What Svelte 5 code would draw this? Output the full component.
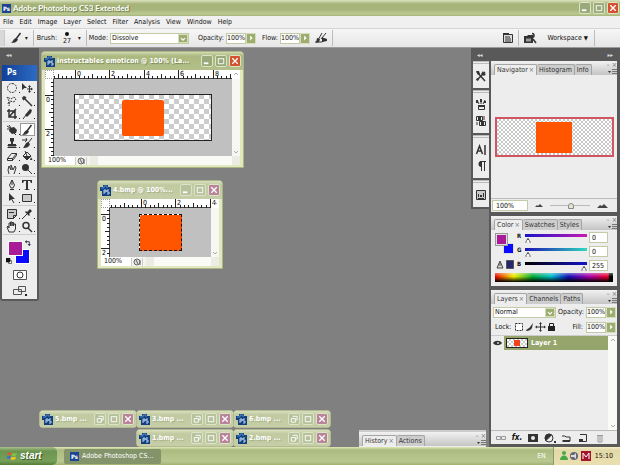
<script lang="ts">
  type Doc = {
    title: string;
    kind: string;
    originX: number;
    originY: number;
    width: number;
    height: number;
    selected: boolean;
  };

  const menus = ['File', 'Edit', 'Image', 'Layer', 'Select', 'Filter', 'Analysis', 'View', 'Window', 'Help'];

  const docs: Doc[] = [
    { title: 'instructables emoticon @ 100% (La...', kind: 'wide', originX: 21, originY: 16, width: 180, height: 77, selected: false },
    { title: '4.bmp @ 100%...', kind: 'small', originX: 31, originY: 6, width: 103, height: 49, selected: true },
  ];

  const minimized = [
    { title: '5.bmp ...', slot: 'r1 c1' },
    { title: '3.bmp ...', slot: 'r1 c2' },
    { title: '6.bmp ...', slot: 'r1 c3' },
    { title: '1.bmp ...', slot: 'r2 c2' },
    { title: '2.bmp ...', slot: 'r2 c3' },
  ];

  // 12x12 glyphs: line = stroked path, fill = solid path
  const toolGroups = [
    [
      { name: 'Marquee', line: 'M6 1.5a4.5 4.5 0 1 1 0 9a4.5 4.5 0 1 1 0-9', dash: '2 1' },
      { name: 'Move', line: 'M6 7h5M8.500 4.500v5', fill: 'M1 1l5 5H3.500L1 8zM8.500 3l1.500 2H7zM8.500 11l1.500-2H7zM12 7l-2-1.500v3z' },
      { name: 'Lasso', line: 'M2 9L3 6L1 2l4 2l3-2l2 2l-2 3l-4-1l-1 5', dash: '2 1' },
      { name: 'Magic wand', line: 'M3 3l8 8M1 3h2M3 1v2M5 2L4 3M2 5l1-1', bold: true },
      { name: 'Crop', line: 'M3 1v8h8M1 3h8v8M3 9l7-8', bold: true },
      { name: 'Slice', line: 'M2 11l3-4', fill: 'M4 7l5-6l2 1l-1 3l-4 4z' },
    ],
    [
      { name: 'Healing brush', line: 'M1 2l3 2M1 5h3M3 1l2 3M8 9l2 2', fill: 'M4 4l4-1l3 3l-1 3l-4 1l-3-3z' },
      { name: 'Brush', line: 'M10.500 1L6 7', fill: 'M6 6l2 1.500C7 10 5 11 1 11c2-1 2-4 5-5z', active: true, bold: true },
      { name: 'Clone stamp', line: 'M1.500 10.500h9M2 8h8v1H2z', fill: 'M4 1h4v3L7 5v2h3v2H2V7h3V5L4 4z' },
      { name: 'History brush', line: 'M11 1L7 6M1 3h5l-1-2M6 3L4 5', fill: 'M7 5l2 2c-1 3-3 4-7 4c2-2 2-5 5-6z' },
      { name: 'Eraser', line: 'M1.500 8.500l4-5h5l-4 5zM1.500 8.500v2h5v-2M6.500 10.500l4-5v-2' },
      { name: 'Paint bucket', line: 'M2 6l4-4l4 4l-4 4zM4 1l2 5', fill: 'M2 6h8l-4 4zM10 7l1.500 3H9z' },
      { name: 'Smudge', line: 'M3 11l-1-4l1-4l2 4V2l2 5l2-4l1 2l-2 6' },
      { name: 'Burn', line: 'M7 7l4 4', fill: 'M4.500 1a3.500 3.500 0 1 1 0 7a3.500 3.500 0 1 1 0-7' },
    ],
    [
      { name: 'Pen', line: 'M6 1v5M3.500 6L6 1l2.500 5L7 9H5zM4 10.500h4' },
      { name: 'Type', fill: 'M1 1h10v3h-1L9 2H7v8l2 1H3l2-1V2H3L2 4H1z' },
      { name: 'Path selection', line: 'M5 6l3 5', fill: 'M3 1l6 6H6L3 9z' },
      { name: 'Rectangle', line: 'M1.500 2.500h9v7h-9z', tint: true },
    ],
    [
      { name: 'Notes', line: 'M1.500 1.500h9v6l-3 3h-6zM7.500 10.500v-3h3M3 4.500h5', tint: true },
      { name: 'Eyedropper', line: 'M1 11l6-6', fill: 'M6 4l3-3l2 2l-3 3l1 1l-1 1l-4-4l1-1z' },
      { name: 'Hand', line: 'M3 11L1 6l1-1l1 2V2h1.500v3V1H6v4V1.500h1.500V5L8 3h1.500v5L8 11z' },
      { name: 'Zoom', line: 'M5 1.500a3 3 0 1 1 0 6a3 3 0 1 1 0-6M7 7l4 4', bold: true },
    ],
  ];

  const dockGroups = [
    [{ name: 'Tool presets', line: 'M2 2l8 9M10 2L2 10', fill: 'M1 1l3 0l1 3l-2 1zM8 1l1 2l2 1l-2 2l-3-2zM1 9l2-1l1 2l-2 1z', bold: true }],
    [
      { name: 'Brushes', line: 'M2 1l2 4M6 1v4M10 1L8 5M3.500 6.500h6v4h-6z', fill: 'M1 1h2v3H1zM5 0h2v3H5zM9 2h2v2H9zM3 6h7v2H3z' },
      { name: 'Clone source', line: 'M1.500 1.500h6v4h-6zM4.500 6.500h6v4h-6zM9 1v4M2 7v3', fill: 'M3 2h3v3H3zM6 7h3v3H6z' },
    ],
    [
      { name: 'Character', line: 'M1.500 10L4.500 2L7.500 10M2.500 7h4M10 1v10', bold: true },
      { name: 'Paragraph', line: 'M6.500 2v9M9.500 2v9M5 1.500h6', fill: 'M6.500 1v6a3 3 0 0 1 0-6' },
    ],
    [{ name: 'Layer comps', line: 'M1.500 1.500h9v9h-9zM3 9.500h6', fill: 'M3 5h1v3H3zM5 6h2v2H5zM8 4h1v4H8z', tint: true }],
  ];

  const layerActions = [
    { name: 'Link layers', line: 'M1.500 4.500h4v3h-4zM6.500 4.500h4v3h-4z', dim: true },
    { name: 'Layer style', text: 'fx.' },
    { name: 'Layer mask', line: 'M1.500 2.500h9v7h-9z', fill: 'M1 2h10v8H1zM6 4a2 2 0 1 0 0 4a2 2 0 1 0 0-4' },
    { name: 'Adjustment layer', line: 'M5 2a4 4 0 1 1 0 8a4 4 0 1 1 0-8', fill: 'M2 9L8 3a4 4 0 0 0-6 6zM10 9h2v2h-2z' },
    { name: 'New group', line: 'M2 4h3l1 1h4v4H2', fill: 'M3 8h7v2H3z' },
    { name: 'New layer', line: 'M3 2.500h6.500v7H4', fill: 'M2 7h4v3H2z' },
    { name: 'Delete layer', line: 'M3 3.500h6M4 3v7h4V3M6 4v5', dim: true },
  ];

  const channels = [
    { id: 'red', label: 'R', value: 0, from: '#1a12c8', to: '#c81ab4' },
    { id: 'green', label: 'G', value: 0, from: '#1a12b4', to: '#30d8c0' },
    { id: 'blue', label: 'B', value: 255, from: '#000000', to: '#1414c8' },
  ];

  // eight ticks per labelled unit; every label counts two centimetres
  function ticks(origin: number, length: number) {
    return Array.from({ length: 60 }, (_, i) => i - 8)
      .map((n) => ({ n, at: origin + Math.round(n * 4.3) }))
      .filter((t) => t.at >= 0 && t.at < length);
  }

  function tickStart(n: number) {
    if (n % 8 === 0) return 0;
    return n % 4 === 0 ? 4 : 6;
  }
</script>

{#snippet glyph(icon)}
  <svg class="glyph" class:dim={icon.dim} viewBox="0 0 12 12" aria-hidden="true">
    {#if icon.line}
      <path
        d={icon.line}
        fill={icon.tint ? '#c9c9c9' : 'none'}
        stroke="currentColor"
        stroke-width={icon.bold ? 1.5 : 1}
        stroke-dasharray={icon.dash}
      />
    {/if}
    {#if icon.fill}<path d={icon.fill} fill="currentColor" fill-rule="evenodd" />{/if}
  </svg>
{/snippet}

{#snippet docIcon()}
  <svg class="doc-icon" viewBox="0 0 11 11" aria-hidden="true">
    <path d="M0 2h3V0h5v2h3v9H2V6H0z" fill="#153e7c" />
    <path d="M1 3h3V1h3v2" fill="none" stroke="#4d8bd0" />
    <path d="M4 9V5h2v2H4M9 5H7v2h2v2H7" fill="none" stroke="#b9d7f4" />
  </svg>
{/snippet}

{#snippet winButtons(restore)}
  <span class="win-buttons">
    <button class="win-btn" aria-label={restore ? 'Restore' : 'Minimize'}>
      <svg viewBox="0 0 11 11" aria-hidden="true">
        {#if restore}
          <path d="M4 2.500h5v4H7M2.500 5h4.500v4H2.500z" fill="none" stroke="#fff" />
        {:else}
          <path d="M2 8h5" stroke="#fff" stroke-width="2" />
        {/if}
      </svg>
    </button>
    <button class="win-btn" aria-label="Maximize">
      <svg viewBox="0 0 11 11" aria-hidden="true">
        <path d="M2.500 3v5.500h6V3M2 3h7" fill="none" stroke="#fff" />
      </svg>
    </button>
    <button class="win-btn close" aria-label="Close">
      <svg viewBox="0 0 11 11" aria-hidden="true">
        <path d="M2.500 2.500l6 6M8.500 2.500l-6 6" stroke="#fff" stroke-width="1.500" />
      </svg>
    </button>
  </span>
{/snippet}

{#snippet chevron(down)}
  <svg class="chevron" viewBox="0 0 8 8" aria-hidden="true">
    <path d={down ? 'M2 3l2 2l2-2' : 'M2 5l2-2l2 2'} fill="none" stroke="#aaa" />
  </svg>
{/snippet}

{#snippet tabs(items)}
  <div class="tab-bar">
    <div class="tabs" role="tablist">
      {#each items as item, i}
        <button class="tab" class:current={i === 0} role="tab" aria-selected={i === 0}>
          {item}{#if i === 0}<span class="tab-x">×</span>{/if}
        </button>
      {/each}
    </div>
    <div class="tab-tools">
      <span>– ×</span>
      <svg width="9" height="6" viewBox="0 0 9 6" aria-hidden="true">
        <path d="M0 2h3L1.500 4z" fill="#333" />
        <path d="M4 .5h5M4 2.500h5M4 4.500h5" stroke="#777" />
      </svg>
    </div>
  </div>
{/snippet}

{#snippet percent(id, label)}
  <label for={id}>{label}</label>
  <span class="percent">
    <input {id} type="text" value="100%" />
    <button class="arrow-btn" aria-label="{label} slider">
      <svg viewBox="0 0 10 10" aria-hidden="true"><path d="M4 2l3 3l-3 3z" fill="#fff" /></svg>
    </button>
  </span>
{/snippet}

{#snippet dropdown(id, option)}
  <span class="dropdown">
    <select {id} aria-label={id}><option>{option}</option></select>
    <span class="arrow-btn">
      <svg viewBox="0 0 10 10" aria-hidden="true"><path d="M2.500 4L5 6.500L7.500 4" fill="none" stroke="#fff" stroke-width="1.500" /></svg>
    </span>
  </span>
{/snippet}

<div class="app">
  <header class="title-bar">
    <span class="ps-badge">Ps</span>
    <h1>Adobe Photoshop CS3 Extended</h1>
    {@render winButtons(false)}
  </header>

  <nav class="menu-bar">
    {#each menus as menu}
      <button>{menu}</button>
    {/each}
  </nav>

  <div class="options-bar">
    <span class="grip"></span>
    <span class="brush-tool">
      {@render glyph(toolGroups[1][1])}
      <span class="caret">▾</span>
    </span>
    <span class="divider"></span>
    <span class="brush-label">Brush:</span>
    <button class="brush-size"><span class="dot"></span>27</button>
    <span class="caret brush-caret">▾</span>
    <span class="divider"></span>
    <label for="mode">Mode:</label>
    <span class="mode">{@render dropdown('mode', 'Dissolve')}</span>
    <span class="field">{@render percent('opacity', 'Opacity:')}</span>
    <span class="field flow">{@render percent('flow', 'Flow:')}</span>
    <svg class="airbrush" viewBox="0 0 14 12" aria-hidden="true">
      <path d="M1 10h7l4-3M8 1L4 8M12 1L7 7" fill="none" stroke="#333" />
      <path d="M3 6l3 1l-1 3l-3 1zM8 5l2 1l3 1v2l-5 1z" fill="#333" />
    </svg>
    <span class="divider"></span>
    <span class="spacer"></span>
    <svg class="glyph" viewBox="0 0 12 12" aria-hidden="true">
      <path d="M1.500 2.500h9v8h-9zM3 5h5M3 7h6M3 9h6" fill="#ddd" stroke="#333" />
      <path d="M1 1h6v2H1z" fill="#333" />
    </svg>
    <span class="divider"></span>
    <svg class="bridge" viewBox="0 0 14 12" aria-hidden="true">
      <path d="M1 4h3l1-1h5v8H1z" fill="#333" />
      <path d="M3 6.500h5v3H3z" fill="#999" />
      <path d="M9 1.500a2 2 0 1 1 0 4M10 7l3 4" fill="none" stroke="#333" stroke-width="1.500" />
    </svg>
    <button class="workspace-menu">Workspace <span class="caret">▼</span></button>
    <span class="divider"></span>
  </div>

  <main class="workspace">
    <aside class="toolbox">
      <div class="collapse">◂◂</div>
      <div class="ps-logo">Ps</div>
      {#each toolGroups as group}
        <div class="tool-group">
          {#each group as tool}
            <button class="tool" class:active={tool.active} aria-label={tool.name}>
              {@render glyph(tool)}
            </button>
          {/each}
        </div>
      {/each}
      <div class="swatches">
        <span class="swatch back"></span>
        <span class="swatch front"></span>
        <svg class="swap" viewBox="0 0 7 7" aria-hidden="true">
          <path d="M1 2h4v4" fill="none" stroke="#223" />
          <path d="M2 0v4L0 2zM3 5h4L5 7z" fill="#223" />
        </svg>
        <svg class="defaults" viewBox="0 0 7 7" aria-hidden="true">
          <path d="M3 3h3.500v3.500H3z" fill="#fff" stroke="#555" />
          <path d="M0 0h5v5H0z" fill="#111" />
        </svg>
      </div>
      <button class="mode-btn" aria-label="Quick mask">
        <svg viewBox="0 0 14 10" aria-hidden="true">
          <path d="M.5.5h13v9H.5z" fill="#fff" stroke="#555" />
          <circle cx="7" cy="5" r="3" fill="#fff" stroke="#333" />
        </svg>
      </button>
      <button class="mode-btn" aria-label="Screen mode">
        <svg viewBox="0 0 14 10" aria-hidden="true">
          <path d="M5.500.5h7v5h-7zM.5 3.500h8v5h-8z" fill="#eee" stroke="#555" />
          <path d="M12 8h2v2h-2z" fill="#222" />
        </svg>
      </button>
    </aside>

    <section class="desktop">
      {#each docs as doc}
        <article class="doc {doc.kind}">
          <div class="doc-title">
            {@render docIcon()}
            <h2>{doc.title}</h2>
            {@render winButtons(false)}
          </div>
          <div class="doc-body">
            <span class="corner"></span>
            <svg class="ruler-h" aria-hidden="true">
              {#each ticks(doc.originX, doc.width) as t}
                <path d="M{t.at} {tickStart(t.n)}V9" transform="translate(.5 0)" stroke="#222" />
                {#if t.n % 8 === 0 && t.n >= 0}<text x={t.at + 2} y="6">{t.n / 4}</text>{/if}
              {/each}
            </svg>
            <span class="scroll-end">{@render chevron(false)}</span>
            <svg class="ruler-v" aria-hidden="true">
              {#each ticks(doc.originY, doc.height) as t}
                <path d="M{tickStart(t.n)} {t.at}H9" transform="translate(0 .5)" stroke="#222" />
                {#if t.n % 8 === 0 && t.n >= 0}<text x="1" y={t.at + 7}>{t.n / 4}</text>{/if}
              {/each}
            </svg>
            <div class="pasteboard">
              <div class="image" class:selected={doc.selected}>
                <div class="orange"></div>
              </div>
            </div>
            <span class="scroll-v">{@render chevron(true)}</span>
            <div class="status">
              <span class="zoom">100%</span>
              <svg class="status-icon" viewBox="0 0 10 8" aria-hidden="true">
                <circle cx="5" cy="4" r="3" fill="#ddd" stroke="#666" />
                <path d="M4 2l2 4M8 2v5" fill="none" stroke="#666" />
              </svg>
              <span class="scroll-h"></span>
            </div>
          </div>
        </article>
      {/each}

      {#each minimized as item}
        <article class="doc mini {item.slot}">
          <div class="doc-title">
            {@render docIcon()}
            <h2>{item.title}</h2>
            {@render winButtons(true)}
          </div>
        </article>
      {/each}

      <div class="history">
        {@render tabs(['History', 'Actions'])}
      </div>
    </section>

    <aside class="dock-icons">
      <div class="collapse">◂◂</div>
      {#each dockGroups as group}
        <div class="dock-group">
          {#each group as icon}
            <button class="dock-btn" aria-label={icon.name}>{@render glyph(icon)}</button>
          {/each}
        </div>
      {/each}
    </aside>

    <aside class="panels">
      <div class="collapse right">▸▸</div>

      <section class="panel">
        {@render tabs(['Navigator', 'Histogram', 'Info'])}
        <div class="navigator">
          <div class="preview"><div class="preview-fill"></div></div>
        </div>
        <div class="nav-footer">
          <input class="nav-zoom" type="text" value="100%" aria-label="Zoom level" />
          <svg viewBox="0 0 8 5" width="8" height="5" aria-hidden="true"><path d="M0 4h8L5 1L3 3L2 2z" fill="#444" /></svg>
          <span class="nav-slider"><input type="range" min="0" max="100" value="52" aria-label="Zoom" /></span>
          <svg viewBox="0 0 11 6" width="11" height="6" aria-hidden="true"><path d="M0 5h11L7 1L5 3L3 2z" fill="#444" /></svg>
        </div>
      </section>

      <section class="panel">
        {@render tabs(['Color', 'Swatches', 'Styles'])}
        <div class="color">
          <div class="color-side">
            <div class="pair">
              <span class="chip back"></span>
              <span class="chip front"></span>
            </div>
            <svg class="gamut" viewBox="0 0 18 9" aria-hidden="true">
              <path d="M4 1L1 8h6zM4 3v3" fill="#ddd" stroke="#444" />
              <path d="M10.500.5h7v8h-7z" fill="#26266e" stroke="#555" />
            </svg>
          </div>
          <div class="channels">
            {#each channels as ch}
              <label for={ch.id}>{ch.label}</label>
              <input
                class="channel-range"
                type="range"
                min="0"
                max="255"
                value={ch.value}
                aria-label="{ch.label} slider"
                style="--from: {ch.from}; --to: {ch.to}"
              />
              <input class="channel-value" id={ch.id} type="text" value={ch.value} />
            {/each}
          </div>
        </div>
        <div class="spectrum"></div>
      </section>

      <section class="panel layers">
        {@render tabs(['Layers', 'Channels', 'Paths'])}
        <div class="layer-row">
          <span class="blend">{@render dropdown('blend', 'Normal')}</span>
          {@render percent('layer-opacity', 'Opacity:')}
        </div>
        <div class="layer-row locks">
          <span>Lock:</span>
          <svg viewBox="0 0 42 10" width="42" height="10" aria-hidden="true">
            <path d="M1.500 1.500h7v7h-7z" fill="#fff" stroke="#333" stroke-dasharray="2 1" />
            <path d="M12 9c1-3 3-2 4-4l3-4l-1 5c-1 2-3 3-6 3z" fill="#333" />
            <path d="M26.500 1v8M22.500 5h8" stroke="#333" />
            <path d="M25 2l1.500-2L28 2zM25 8l1.500 2L28 8zM23 3.500L21 5l2 1.500zM30 3.500L32 5l-2 1.500z" fill="#333" />
            <path d="M34 4h7v5h-7z" fill="#222" />
            <path d="M35.500 4V1.500h4V4" fill="none" stroke="#222" />
          </svg>
          <span class="spacer"></span>
          {@render percent('fill', 'Fill:')}
        </div>
        <div class="layer-list">
          <div class="layer-items">
            <div class="layer">
              <button class="eye" aria-label="Toggle visibility">
                <svg viewBox="0 0 9 7" aria-hidden="true">
                  <path d="M0 3C2 0 7 0 9 3C7 6 2 6 0 3z" fill="#333" />
                  <circle cx="5" cy="3" r="1" fill="#ccc" />
                </svg>
              </button>
              <div class="layer-main">
                <span class="thumb"><span></span></span>
                <span>Layer 1</span>
              </div>
            </div>
          </div>
          <div class="layer-scroll">{@render chevron(false)}{@render chevron(true)}</div>
        </div>
        <div class="layer-footer">
          {#each layerActions as action}
            <button aria-label={action.name}>
              {#if action.text}<i>{action.text}</i>{:else}{@render glyph(action)}{/if}
            </button>
          {/each}
        </div>
      </section>
    </aside>
  </main>

  <footer class="taskbar">
    <button class="start">
      <svg viewBox="0 0 11 11" aria-hidden="true">
        <path d="M1 2c2-1 3-1 4 0L4 5C3 4 2 4 0 5z" fill="#e8502c" />
        <path d="M6 2c1 1 3 1 5 0l-1 3c-2 1-4 1-5 0z" fill="#7cc242" />
        <path d="M0 6c2-1 3-1 4 0L3 9C2 8 1 8-1 9z" fill="#3b6fd8" />
        <path d="M5 6c1 1 3 1 5 0L9 9c-2 1-4 1-5 0z" fill="#f5c51c" />
      </svg>
      start
    </button>
    <button class="task"><span class="ps-badge">Ps</span>Adobe Photoshop CS...</button>
    <span class="spacer"></span>
    <span class="lang">EN</span>
    <div class="tray">
      <svg viewBox="0 0 32 12" width="32" height="12" aria-hidden="true">
        <circle cx="5" cy="3" r="2" fill="#48a848" />
        <path d="M1 10c0-6 8-6 8 0z" fill="#48a848" />
        <circle cx="15" cy="6" r="4" fill="#667" />
        <path d="M12 5h3l2-2v6l-2-2h-3z" fill="#ddd" />
        <path d="M22 1h10v10H22z" fill="#a5142c" />
        <path d="M24 9V3l3 4l3-4v6" fill="none" stroke="#fff" />
      </svg>
      <time>15:10</time>
    </div>
  </footer>
</div>

<style>
  :global(body) {
    background: #808080;
  }

  .app {
    --face: #ededed;
    --frame: #595959;
    --olive: #9dad71;
    --orange: #ff5500;
    display: flex;
    flex-direction: column;
    min-height: 100vh;
    font-family: 'DejaVu Sans Condensed', Tahoma, 'DejaVu Sans', sans-serif;
    font-size: 7px;
    line-height: 10px;
    color: #111;
  }

  .app :global(*) {
    box-sizing: border-box;
  }

  button,
  input,
  select {
    margin: 0;
    padding: 0;
    border: 0;
    background: none;
    font: inherit;
    color: inherit;
  }

  h1,
  h2 {
    margin: 0;
    font-weight: bold;
    white-space: nowrap;
    overflow: hidden;
    flex: 1;
    min-width: 0;
  }

  svg {
    display: block;
    flex-shrink: 0;
  }

  .glyph {
    width: 12px;
    height: 12px;
    color: #333;
  }

  .glyph.dim {
    color: #999;
  }

  .chevron {
    width: 8px;
    height: 8px;
  }

  .spacer {
    flex: 1;
  }

  /* Title bar */
  .title-bar {
    display: flex;
    align-items: center;
    height: 16px;
    padding: 0 1px 0 2px;
    gap: 2px;
    background: linear-gradient(#dbe3bf 0, #a5b378 4px, #a9b77f 10px, #bdc992 14px, #a5b378);
  }

  .title-bar h1 {
    font-family: Lato, 'Trebuchet MS', sans-serif;
    font-size: 8px;
    color: #fff;
    text-shadow: 1px 1px 1px #66733f;
  }

  .ps-badge {
    width: 9px;
    height: 9px;
    font-size: 6px;
    line-height: 9px;
    font-weight: bold;
    text-align: center;
    color: #fff;
    background: #1c4494;
  }

  .win-buttons {
    display: flex;
    gap: 2px;
  }

  .win-btn {
    width: 12px;
    height: 12px;
    border: 1px solid #dbe4c4;
    border-radius: 2px;
    background: #9aa97a;
  }

  .win-btn.close {
    background: #d3512f;
  }

  /* Menu */
  .menu-bar {
    display: flex;
    align-items: center;
    gap: 6px;
    height: 12px;
    padding: 0 3px;
    background: #f0f0f0;
  }

  /* Options */
  .options-bar {
    display: flex;
    align-items: center;
    height: 20px;
    border-top: 1px solid #d4d4d4;
    border-bottom: 1px solid #9a9a9a;
    background: linear-gradient(#f6f6f6, #e6e6e6);
  }

  .grip {
    width: 5px;
    height: 16px;
    border-right: 1px solid #c8c8c8;
    background: #d8d8d8;
  }

  .divider {
    width: 1px;
    height: 16px;
    background: #bbb;
  }

  .caret {
    font-size: 6px;
  }

  .brush-tool {
    display: flex;
    align-items: center;
    gap: 3px;
    padding: 0 5px;
  }

  .brush-label {
    padding: 0 4px 0 3px;
  }

  .brush-size {
    display: flex;
    flex-direction: column;
    align-items: center;
    gap: 1px;
    width: 12px;
    line-height: 8px;
  }

  .dot {
    width: 4px;
    height: 4px;
    border-radius: 50%;
    background: #111;
  }

  .brush-caret {
    padding: 0 5px;
  }

  .options-bar label {
    padding: 0 2px;
  }

  .dropdown,
  .percent {
    display: flex;
    height: 11px;
  }

  .dropdown {
    width: 100%;
    border: 1px solid #c3cba6;
    background: #fff;
  }

  .dropdown select {
    appearance: none;
    flex: 1;
    min-width: 0;
    padding-left: 1px;
    line-height: 9px;
  }

  .arrow-btn {
    width: 10px;
    border: 1px solid #d5ddb9;
    background: var(--olive);
  }

  .percent input {
    width: 20px;
    border: 1px solid #c3cba6;
    background: #fff;
    text-align: center;
  }

  .mode {
    width: 79px;
  }

  .field {
    display: flex;
    align-items: center;
    padding-left: 7px;
  }

  .field.flow {
    padding-left: 4px;
  }

  .airbrush,
  .bridge {
    width: 14px;
    height: 12px;
    margin: 0 4px;
  }

  .options-bar > .glyph {
    margin-right: 4px;
  }

  .workspace-menu {
    padding: 0 6px;
  }

  .options-bar > .divider:last-child {
    margin-right: 25px;
  }

  /* Workspace */
  .workspace {
    flex: 1;
    display: flex;
    align-items: flex-start;
    background: #808080;
  }

  .collapse {
    height: 13px;
    padding: 0 4px;
    font-size: 6px;
    line-height: 14px;
    color: #ddd;
    background: var(--frame);
  }

  .collapse.right {
    text-align: right;
  }

  .toolbox {
    width: 39px;
    border: solid var(--frame);
    border-width: 0 2px 2px;
    border-radius: 0 0 3px 3px;
    background: var(--face);
  }

  .toolbox .collapse {
    height: 17px;
  }

  .ps-logo {
    height: 16px;
    padding-left: 5px;
    font-size: 8px;
    font-weight: bold;
    line-height: 16px;
    color: #fff;
    background: linear-gradient(90deg, #123f97, #2d6cc4);
  }

  .tool-group {
    display: grid;
    grid-template-columns: 15px 15px;
    justify-content: center;
    padding-bottom: 1px;
    margin: 0 1px 1px;
    border-bottom: 1px solid #ccc;
  }

  .tool {
    display: flex;
    align-items: center;
    justify-content: center;
    height: 13px;
    background: linear-gradient(#222, #222) 14px 11px / 1px 1px no-repeat;
  }

  .tool.active {
    border: 1px solid #999;
    background: #fff;
  }

  .swatches {
    position: relative;
    height: 31px;
    margin: 0 4px;
  }

  .swatch,
  .swap,
  .defaults {
    position: absolute;
  }

  .swatch {
    width: 15px;
    height: 15px;
    border: 1px solid #fff;
  }

  .swatch.front {
    left: 2px;
    top: 5px;
    background: #a81a96;
  }

  .swatch.back {
    left: 9px;
    top: 13px;
    background: #0a0aff;
  }

  .swap {
    right: 2px;
    top: 4px;
    width: 6px;
    height: 6px;
  }

  .defaults {
    left: 0;
    bottom: 3px;
    width: 6px;
    height: 6px;
  }

  .mode-btn {
    display: flex;
    align-items: center;
    justify-content: center;
    width: 100%;
    height: 16px;
  }

  .mode-btn svg {
    width: 14px;
    height: 10px;
  }

  .desktop {
    position: relative;
    flex: 1;
    align-self: stretch;
  }

  /* Document windows sit on a free canvas */
  .doc {
    position: absolute;
    padding: 0 3px 2px;
    border: 1px solid #a9b585;
    border-radius: 4px 4px 0 0;
    background: #e1e8bd;
  }

  .doc.wide {
    left: 2px;
    top: 3px;
    width: 203px;
  }

  .doc.small {
    left: 58px;
    top: 132px;
    width: 126px;
  }

  .doc-title {
    display: flex;
    align-items: center;
    gap: 2px;
    height: 18px;
    margin: 0 -3px;
    padding: 0 2px;
    border-radius: 3px 3px 0 0;
    background: linear-gradient(#d3dab0, #abb87f 4px, #b3bf89);
  }

  .doc-title h2 {
    font-size: 7px;
    color: #fff;
    text-shadow: 1px 1px 1px #7a8655;
  }

  .doc-icon {
    width: 11px;
    height: 11px;
  }

  .small .doc-title,
  .mini .doc-title {
    background: linear-gradient(#d9dfbe, #c0c9a0 4px, #c6cea8);
  }

  .small h2,
  .mini h2 {
    text-shadow: 1px 1px 1px #a2ac82;
  }

  .small .win-btn,
  .mini .win-btn {
    background: #b7c19b;
  }

  .small .close,
  .mini .close {
    background: #b9839a;
  }

  .doc.mini {
    width: 98px;
    padding: 0 3px;
    border-color: #b1ba92;
    border-radius: 4px;
  }

  .mini .doc-title {
    height: 16px;
  }

  .mini.r1 {
    bottom: 19px;
  }

  .mini.r2 {
    bottom: 0;
  }

  .mini.c1 {
    left: 0;
  }

  .mini.c2 {
    left: 97px;
  }

  .mini.c3 {
    left: 194px;
  }

  .doc-body {
    display: grid;
    grid-template-columns: 9px 1fr 8px;
    grid-template-rows: 9px auto 9px;
    background: #fff;
  }

  .corner {
    border: 1px dotted #999;
  }

  .ruler-h,
  .ruler-v {
    width: 100%;
    height: 100%;
    overflow: visible;
  }

  .ruler-h {
    border-bottom: 1px solid #444;
  }

  .ruler-v {
    height: 0;
    min-height: 100%;
    border-right: 1px solid #444;
  }

  .ruler-h text,
  .ruler-v text {
    font-size: 7px;
  }

  .pasteboard {
    display: flex;
    align-items: center;
    justify-content: center;
    height: 77px;
    background: #c0c0c0;
  }

  .small .pasteboard {
    height: 49px;
  }

  .image {
    display: flex;
    align-items: center;
    justify-content: center;
    width: 138px;
    height: 47px;
    outline: 1px solid #222;
    outline-offset: -1px;
    background: repeating-conic-gradient(#ccc 0 25%, #fff 0 50%) 0 0 / 10px 10px;
  }

  .small .image {
    width: 43px;
    height: 37px;
  }

  .orange {
    width: 42px;
    height: 36px;
    border-radius: 2px;
    background: var(--orange);
  }

  .image.selected {
    outline: 1px dashed #111;
    background: #fff;
  }

  .scroll-v {
    display: flex;
    align-items: flex-end;
    background: #f7f7f3;
  }

  .status {
    grid-column: 1 / -1;
    display: flex;
    align-items: center;
    background: #f5f5f0;
  }

  .zoom {
    width: 30px;
    padding-left: 3px;
    line-height: 9px;
    background: #fff;
  }

  .status-icon {
    width: 12px;
    height: 8px;
    border: solid #ccc;
    border-width: 0 1px;
  }

  .scroll-h {
    flex: 1;
    height: 9px;
    margin-left: 3px;
    border-left: 8px solid #ecece4;
    border-right: 8px solid #ecece4;
    background: #fafaf6;
  }

  .history {
    position: absolute;
    right: -15px;
    bottom: 0;
    width: 127px;
    padding-top: 2px;
    background: #ccc;
  }

  /* Tabs */
  .tab-bar {
    display: flex;
    justify-content: space-between;
    height: 15px;
    background: linear-gradient(#f2f2f2, #c4c4c4);
    border-bottom: 1px solid #eee;
  }

  .tabs {
    display: flex;
    align-items: flex-end;
    padding-left: 3px;
  }

  .tab {
    height: 11px;
    padding: 0 2px;
    border: 1px solid #a5a5a5;
    border-width: 1px 1px 0 0;
    border-radius: 2px 2px 0 0;
    white-space: nowrap;
    color: #333;
    background: #cdcdcd;
  }

  .tab.current {
    border-left-width: 1px;
    background: var(--face);
  }

  .tab-x {
    padding-left: 1px;
    color: #777;
  }

  .tab-tools {
    display: flex;
    flex-direction: column;
    align-items: flex-end;
    line-height: 8px;
    color: #777;
  }

  /* Icon dock */
  .dock-icons {
    width: 18px;
    border: solid var(--frame);
    border-width: 0 0 2px 2px;
    background: var(--frame);
  }

  .dock-group {
    padding: 4px 0;
    margin-bottom: 2px;
    border-top: 3px double #bbb;
    background: var(--face);
  }

  .dock-group:last-child {
    margin-bottom: 0;
  }

  .dock-btn {
    display: flex;
    align-items: center;
    justify-content: center;
    width: 100%;
    height: 16px;
  }

  /* Panels */
  .panels {
    display: flex;
    flex-direction: column;
    gap: 4px;
    align-self: stretch;
    width: 131px;
    padding: 0 3px 3px 2px;
    background: var(--frame);
  }

  .panels .collapse {
    margin-bottom: -4px;
  }

  .panel {
    background: var(--face);
  }

  .navigator {
    display: flex;
    align-items: center;
    justify-content: center;
    height: 123px;
    border-bottom: 1px solid #bbb;
  }

  .preview {
    display: flex;
    align-items: center;
    justify-content: center;
    width: 119px;
    height: 40px;
    border: 2px solid #cf5560;
    background: repeating-conic-gradient(#c8c8c8 0 25%, #fff 0 50%) 0 0 / 4px 4px;
  }

  .preview-fill {
    width: 36px;
    height: 31px;
    background: var(--orange);
  }

  .nav-footer {
    display: flex;
    align-items: center;
    gap: 7px;
    height: 13px;
    padding: 1px 9px 1px 1px;
  }

  .nav-zoom {
    width: 36px;
    height: 11px;
    padding-left: 3px;
    border: 1px solid #c3cba6;
    background: #fff;
  }

  .nav-slider {
    flex: 1;
    display: flex;
    min-width: 0;
  }

  .nav-slider input,
  .channel-range {
    appearance: none;
    width: 100%;
    min-width: 0;
    height: 10px;
  }

  .nav-slider input {
    background: linear-gradient(#bbb, #bbb) center / 100% 1px no-repeat;
  }

  .nav-slider input::-webkit-slider-thumb {
    appearance: none;
    width: 6px;
    height: 6px;
    border: 1px solid #888;
    border-radius: 3px 3px 0 0;
    background: #e6e6d0;
  }

  .color {
    display: flex;
    padding: 1px 9px 0 5px;
  }

  .color-side {
    display: flex;
    flex-direction: column;
    justify-content: space-between;
    width: 21px;
    padding: 2px 0;
  }

  .pair {
    position: relative;
    height: 21px;
  }

  .chip {
    position: absolute;
    width: 11px;
    height: 11px;
    border: 1px solid #ddd;
  }

  .chip.front {
    left: 0;
    top: 0;
    background: #a81a96;
    outline: 1px solid #999;
  }

  .chip.back {
    left: 7px;
    top: 9px;
    background: #0a0aff;
  }

  .gamut {
    width: 18px;
    height: 9px;
  }

  .channels {
    flex: 1;
    display: grid;
    grid-template-columns: 6px 1fr 19px;
    column-gap: 2px;
    row-gap: 3px;
    align-items: center;
  }

  .channels label {
    align-self: start;
    font-size: 6px;
    font-weight: bold;
    line-height: 8px;
  }

  .channel-range {
    background: linear-gradient(90deg, var(--from), var(--to)) 0 1px / 100% 3px no-repeat;
  }

  .channel-range::-webkit-slider-thumb {
    appearance: none;
    width: 6px;
    height: 5px;
    margin-top: 5px;
    background: radial-gradient(circle at 50% 70%, #fff 1px, #555 2px);
    clip-path: polygon(50% 0, 100% 100%, 0 100%);
  }

  .channel-value {
    width: 100%;
    height: 11px;
    padding-left: 2px;
    border: 1px solid #c3cba6;
    background: #fff;
  }

  .spectrum {
    height: 9px;
    margin: 2px 4px 0;
    background:
      linear-gradient(rgba(255, 255, 255, 0.4), transparent 40%, #000),
      linear-gradient(90deg, #e00, #ee0 16%, #0a3 32%, #0bc 48%, #11b 62%, #a0a 80%, #e02 96%, #000 97%);
  }

  .panel:has(.spectrum) {
    padding-bottom: 4px;
  }

  .layers {
    flex: 1;
    display: flex;
    flex-direction: column;
  }

  .layer-row {
    display: flex;
    align-items: center;
    justify-content: space-between;
    height: 14px;
    padding: 0 1px 0 2px;
  }

  .blend {
    width: 63px;
  }

  .layer-row.locks {
    gap: 3px;
    height: 16px;
    padding-left: 4px;
  }

  .layer-list {
    flex: 1;
    display: flex;
    border-top: 1px solid #ccc;
    border-bottom: 1px solid #bbb;
  }

  .layer-items {
    flex: 1;
  }

  .layer {
    display: flex;
    height: 14px;
  }

  .eye {
    display: flex;
    align-items: center;
    justify-content: center;
    width: 13px;
  }

  .eye svg {
    width: 9px;
    height: 7px;
  }

  .layer-main {
    flex: 1;
    display: flex;
    align-items: center;
    gap: 3px;
    padding-left: 2px;
    font-weight: bold;
    color: #fff;
    background: #95a56b;
  }

  .thumb {
    display: flex;
    align-items: center;
    justify-content: center;
    width: 22px;
    height: 10px;
    border: 1px solid #222;
    background: repeating-conic-gradient(#ccc 0 25%, #fff 0 50%) 0 0 / 4px 4px;
  }

  .thumb span {
    width: 6px;
    height: 6px;
    background: #f0421c;
  }

  .layer-scroll {
    display: flex;
    flex-direction: column;
    justify-content: space-between;
    align-items: center;
    width: 9px;
    background: #fafaf7;
  }

  .layer-footer {
    display: flex;
    align-items: center;
    justify-content: space-between;
    height: 13px;
    padding: 0 11px 0 4px;
  }

  .layer-footer i {
    font-size: 8px;
    font-weight: bold;
  }

  /* Taskbar */
  .taskbar {
    display: flex;
    align-items: center;
    height: 18px;
    background: linear-gradient(#e0e8b4, #aabb80 3px, #b9c88f 14px, #a3b377);
  }

  .start {
    display: flex;
    align-items: center;
    gap: 3px;
    height: 18px;
    width: 57px;
    margin-right: 7px;
    padding-left: 7px;
    border-radius: 0 5px 5px 0;
    font-family: 'Liberation Sans', Arial, sans-serif;
    font-size: 10px;
    font-weight: bold;
    font-style: italic;
    color: #fff;
    text-shadow: 1px 1px 1px #344d1c;
    background: linear-gradient(#a9c08a, #6b9450 4px, #769f58 14px, #557c3a);
  }

  .start svg {
    width: 10px;
    height: 10px;
  }

  .task {
    display: flex;
    align-items: center;
    gap: 3px;
    width: 97px;
    height: 15px;
    padding-left: 6px;
    border-radius: 2px;
    white-space: nowrap;
    color: #fff;
    background: #83936a;
  }

  .lang {
    padding-right: 7px;
    color: #fff;
  }

  .tray {
    display: flex;
    align-items: center;
    gap: 4px;
    height: 18px;
    padding: 0 7px 0 5px;
    border-left: 1px solid #8f9a63;
    background: linear-gradient(#f4edc8, #e3d9a8 3px, #eadfb0);
  }
</style>
